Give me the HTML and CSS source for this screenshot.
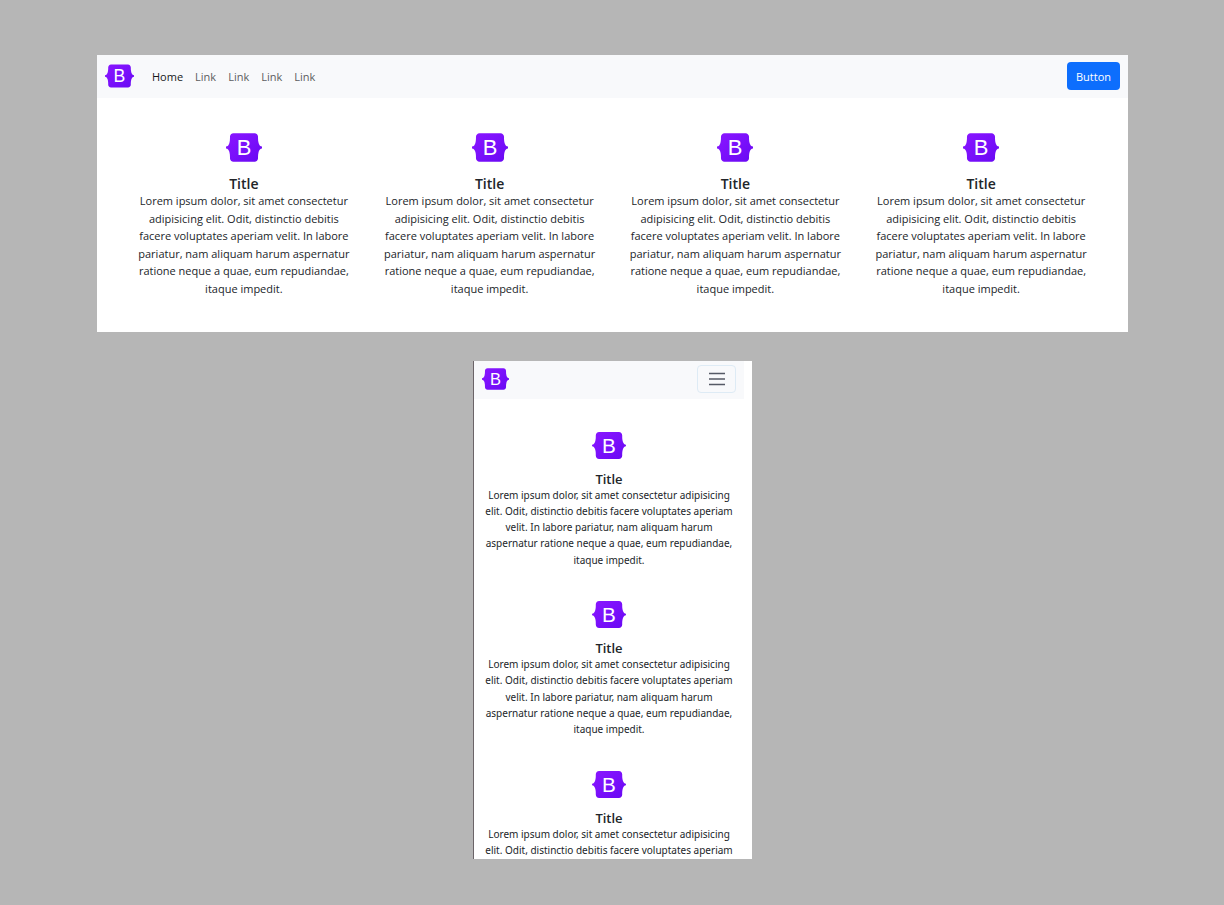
FILE: index.html
```html
<!DOCTYPE html>
<html lang="en">
<head>
<meta charset="utf-8">
<meta name="viewport" content="width=device-width, initial-scale=1">
<title>Responsive features</title>
<link rel="stylesheet" href="styles.css">
</head>
<body>
<svg class="defs" aria-hidden="true">
  <defs>
    <linearGradient id="purple" x1="0" y1="0" x2="1" y2="1">
      <stop offset="0" stop-color="#8a16ff"/>
      <stop offset="0.5" stop-color="#7a10fb"/>
      <stop offset="1" stop-color="#6808f2"/>
    </linearGradient>
    <symbol id="logo" viewBox="0 0 118 94">
      <path fill="url(#purple)" d="M24.5 0c-6.7 0-11.7 5.9-11.5 12.3.2 6.1-.1 14.1-2.1 20.6C8.900 39.400 5.500 43.500 0 44v6c5.500.5 8.900 4.600 10.900 11.100 2 6.500 2.300 14.500 2.100 20.600-.2 6.400 4.800 12.300 11.500 12.300h69c6.700 0 11.700-5.900 11.500-12.300-.2-6.100.1-14.100 2.100-20.600 2-6.500 5.400-10.600 10.900-11.100v-6c-5.500-.5-8.900-4.600-10.900-11.100-2-6.500-2.300-14.500-2.100-20.600C105.200 5.900 100.200 0 93.500 0z"/>
      <text class="logo-letter" x="59" y="73" text-anchor="middle">B</text>
    </symbol>
  </defs>
</svg>
<main class="stage">
  <section class="screen wide">
    <header class="navbar">
      <a class="brand" href="#" aria-label="Home page"><svg class="logo"><use href="#logo"/></svg></a>
      <nav class="links">
        <a class="active" href="#">Home</a>
        <a href="#">Link</a>
        <a href="#">Link</a>
        <a href="#">Link</a>
        <a href="#">Link</a>
      </nav>
      <button class="action" type="button">Button</button>
    </header>
    <div class="features">
      <article class="feature"><svg class="logo"><use href="#logo"/></svg><h2>Title</h2><p>Lorem ipsum dolor, sit amet consectetur adipisicing elit. Odit, distinctio debitis facere voluptates aperiam velit. In labore pariatur, nam aliquam harum aspernatur ratione neque a quae, eum repudiandae, itaque impedit.</p></article>
      <article class="feature"><svg class="logo"><use href="#logo"/></svg><h2>Title</h2><p>Lorem ipsum dolor, sit amet consectetur adipisicing elit. Odit, distinctio debitis facere voluptates aperiam velit. In labore pariatur, nam aliquam harum aspernatur ratione neque a quae, eum repudiandae, itaque impedit.</p></article>
      <article class="feature"><svg class="logo"><use href="#logo"/></svg><h2>Title</h2><p>Lorem ipsum dolor, sit amet consectetur adipisicing elit. Odit, distinctio debitis facere voluptates aperiam velit. In labore pariatur, nam aliquam harum aspernatur ratione neque a quae, eum repudiandae, itaque impedit.</p></article>
      <article class="feature"><svg class="logo"><use href="#logo"/></svg><h2>Title</h2><p>Lorem ipsum dolor, sit amet consectetur adipisicing elit. Odit, distinctio debitis facere voluptates aperiam velit. In labore pariatur, nam aliquam harum aspernatur ratione neque a quae, eum repudiandae, itaque impedit.</p></article>
    </div>
  </section>
  <section class="screen narrow">
    <header class="navbar">
      <a class="brand" href="#" aria-label="Home page"><svg class="logo"><use href="#logo"/></svg></a>
      <button class="toggler" type="button" aria-label="Toggle navigation">
        <svg class="bars" viewBox="0 0 18 14"><path d="M1 1.500h16M1 7h16M1 12.500h16"/></svg>
      </button>
    </header>
    <div class="features">
      <article class="feature"><svg class="logo"><use href="#logo"/></svg><h2>Title</h2><p>Lorem ipsum dolor, sit amet consectetur adipisicing elit. Odit, distinctio debitis facere voluptates aperiam velit. In labore pariatur, nam aliquam harum aspernatur ratione neque a quae, eum repudiandae, itaque impedit.</p></article>
      <article class="feature"><svg class="logo"><use href="#logo"/></svg><h2>Title</h2><p>Lorem ipsum dolor, sit amet consectetur adipisicing elit. Odit, distinctio debitis facere voluptates aperiam velit. In labore pariatur, nam aliquam harum aspernatur ratione neque a quae, eum repudiandae, itaque impedit.</p></article>
      <article class="feature"><svg class="logo"><use href="#logo"/></svg><h2>Title</h2><p>Lorem ipsum dolor, sit amet consectetur adipisicing elit. Odit, distinctio debitis facere voluptates aperiam velit. In labore pariatur, nam aliquam harum aspernatur ratione neque a quae, eum repudiandae, itaque impedit.</p></article>
    </div>
  </section>
</main>
</body>
</html>
```

FILE: styles.css
```css
* {
  box-sizing: border-box;
}

body {
  margin: 0;
  background: #b6b6b6;
  color: #212529;
  font-family: "Open Sans", "Noto Sans", sans-serif;
  font-size: 11px;
}

.defs {
  position: absolute;
  width: 0;
  height: 0;
}

.stage {
  display: flex;
  flex-direction: column;
  gap: 29px;
  min-height: 100vh;
  padding: 55px 96px 46px 97px;
}

.screen {
  background: #fff;
}

.logo {
  display: block;
  width: 36px;
  height: 29px;
}

.logo-letter {
  fill: #fff;
  font-family: "Liberation Sans", Arial, sans-serif;
  font-size: 72px;
}

.navbar {
  display: flex;
  align-items: center;
  min-height: 43px;
  padding: 0 8px 1px;
  background: #f8f9fb;
}

.navbar .logo {
  width: 29px;
  height: 24px;
}

.links {
  display: flex;
  gap: 12px;
  margin-left: 18px;
}

.links a {
  color: #5c5d60;
  text-decoration: none;
}

.links .active {
  color: #17181a;
}

.action {
  height: 28px;
  margin-left: auto;
  padding: 0 9px;
  border: 0;
  border-radius: 4px;
  background: #0d6efd;
  color: #fff;
  font: inherit;
}

.features {
  display: grid;
  grid-template-columns: repeat(4, 1fr);
  padding: 0 24px;
}

.feature {
  display: flex;
  flex-direction: column;
  align-items: center;
  padding: 35px 16px 34px;
  text-align: center;
}

.feature h2 {
  margin: 13px 0 0;
  font-size: 14px;
  font-weight: 600;
  line-height: 17px;
}

.feature p {
  margin: 0;
  line-height: 1.6;
}

.narrow {
  align-self: center;
  width: 279px;
  height: 498px;
  padding-right: 8px;
  overflow: hidden;
  border-left: 1px solid #6b6468;
  font-family: "Noto Sans", "Open Sans", sans-serif;
  font-size: 10px;
}

.narrow .navbar {
  min-height: 38px;
  padding-bottom: 2px;
}

.narrow .navbar .logo {
  width: 27px;
  height: 22px;
}

.toggler {
  display: grid;
  place-items: center;
  width: 39px;
  height: 28px;
  margin-left: auto;
  padding: 0;
  border: 1px solid #deebf5;
  border-radius: 4px;
  background: transparent;
}

.bars {
  width: 18px;
  height: 14px;
  fill: none;
  stroke: #555a66;
  stroke-width: 1.5px;
}

.narrow .features {
  grid-template-columns: 1fr;
  padding: 0;
}

.narrow .feature {
  padding: 33px 6px 0;
}

.narrow .feature .logo {
  width: 34px;
  height: 27px;
}

.narrow .feature h2 {
  margin-top: 12px;
  font-family: "Open Sans", "Noto Sans", sans-serif;
  font-size: 13px;
  line-height: 16px;
}

.narrow .feature p {
  line-height: 1.63;
}
```
